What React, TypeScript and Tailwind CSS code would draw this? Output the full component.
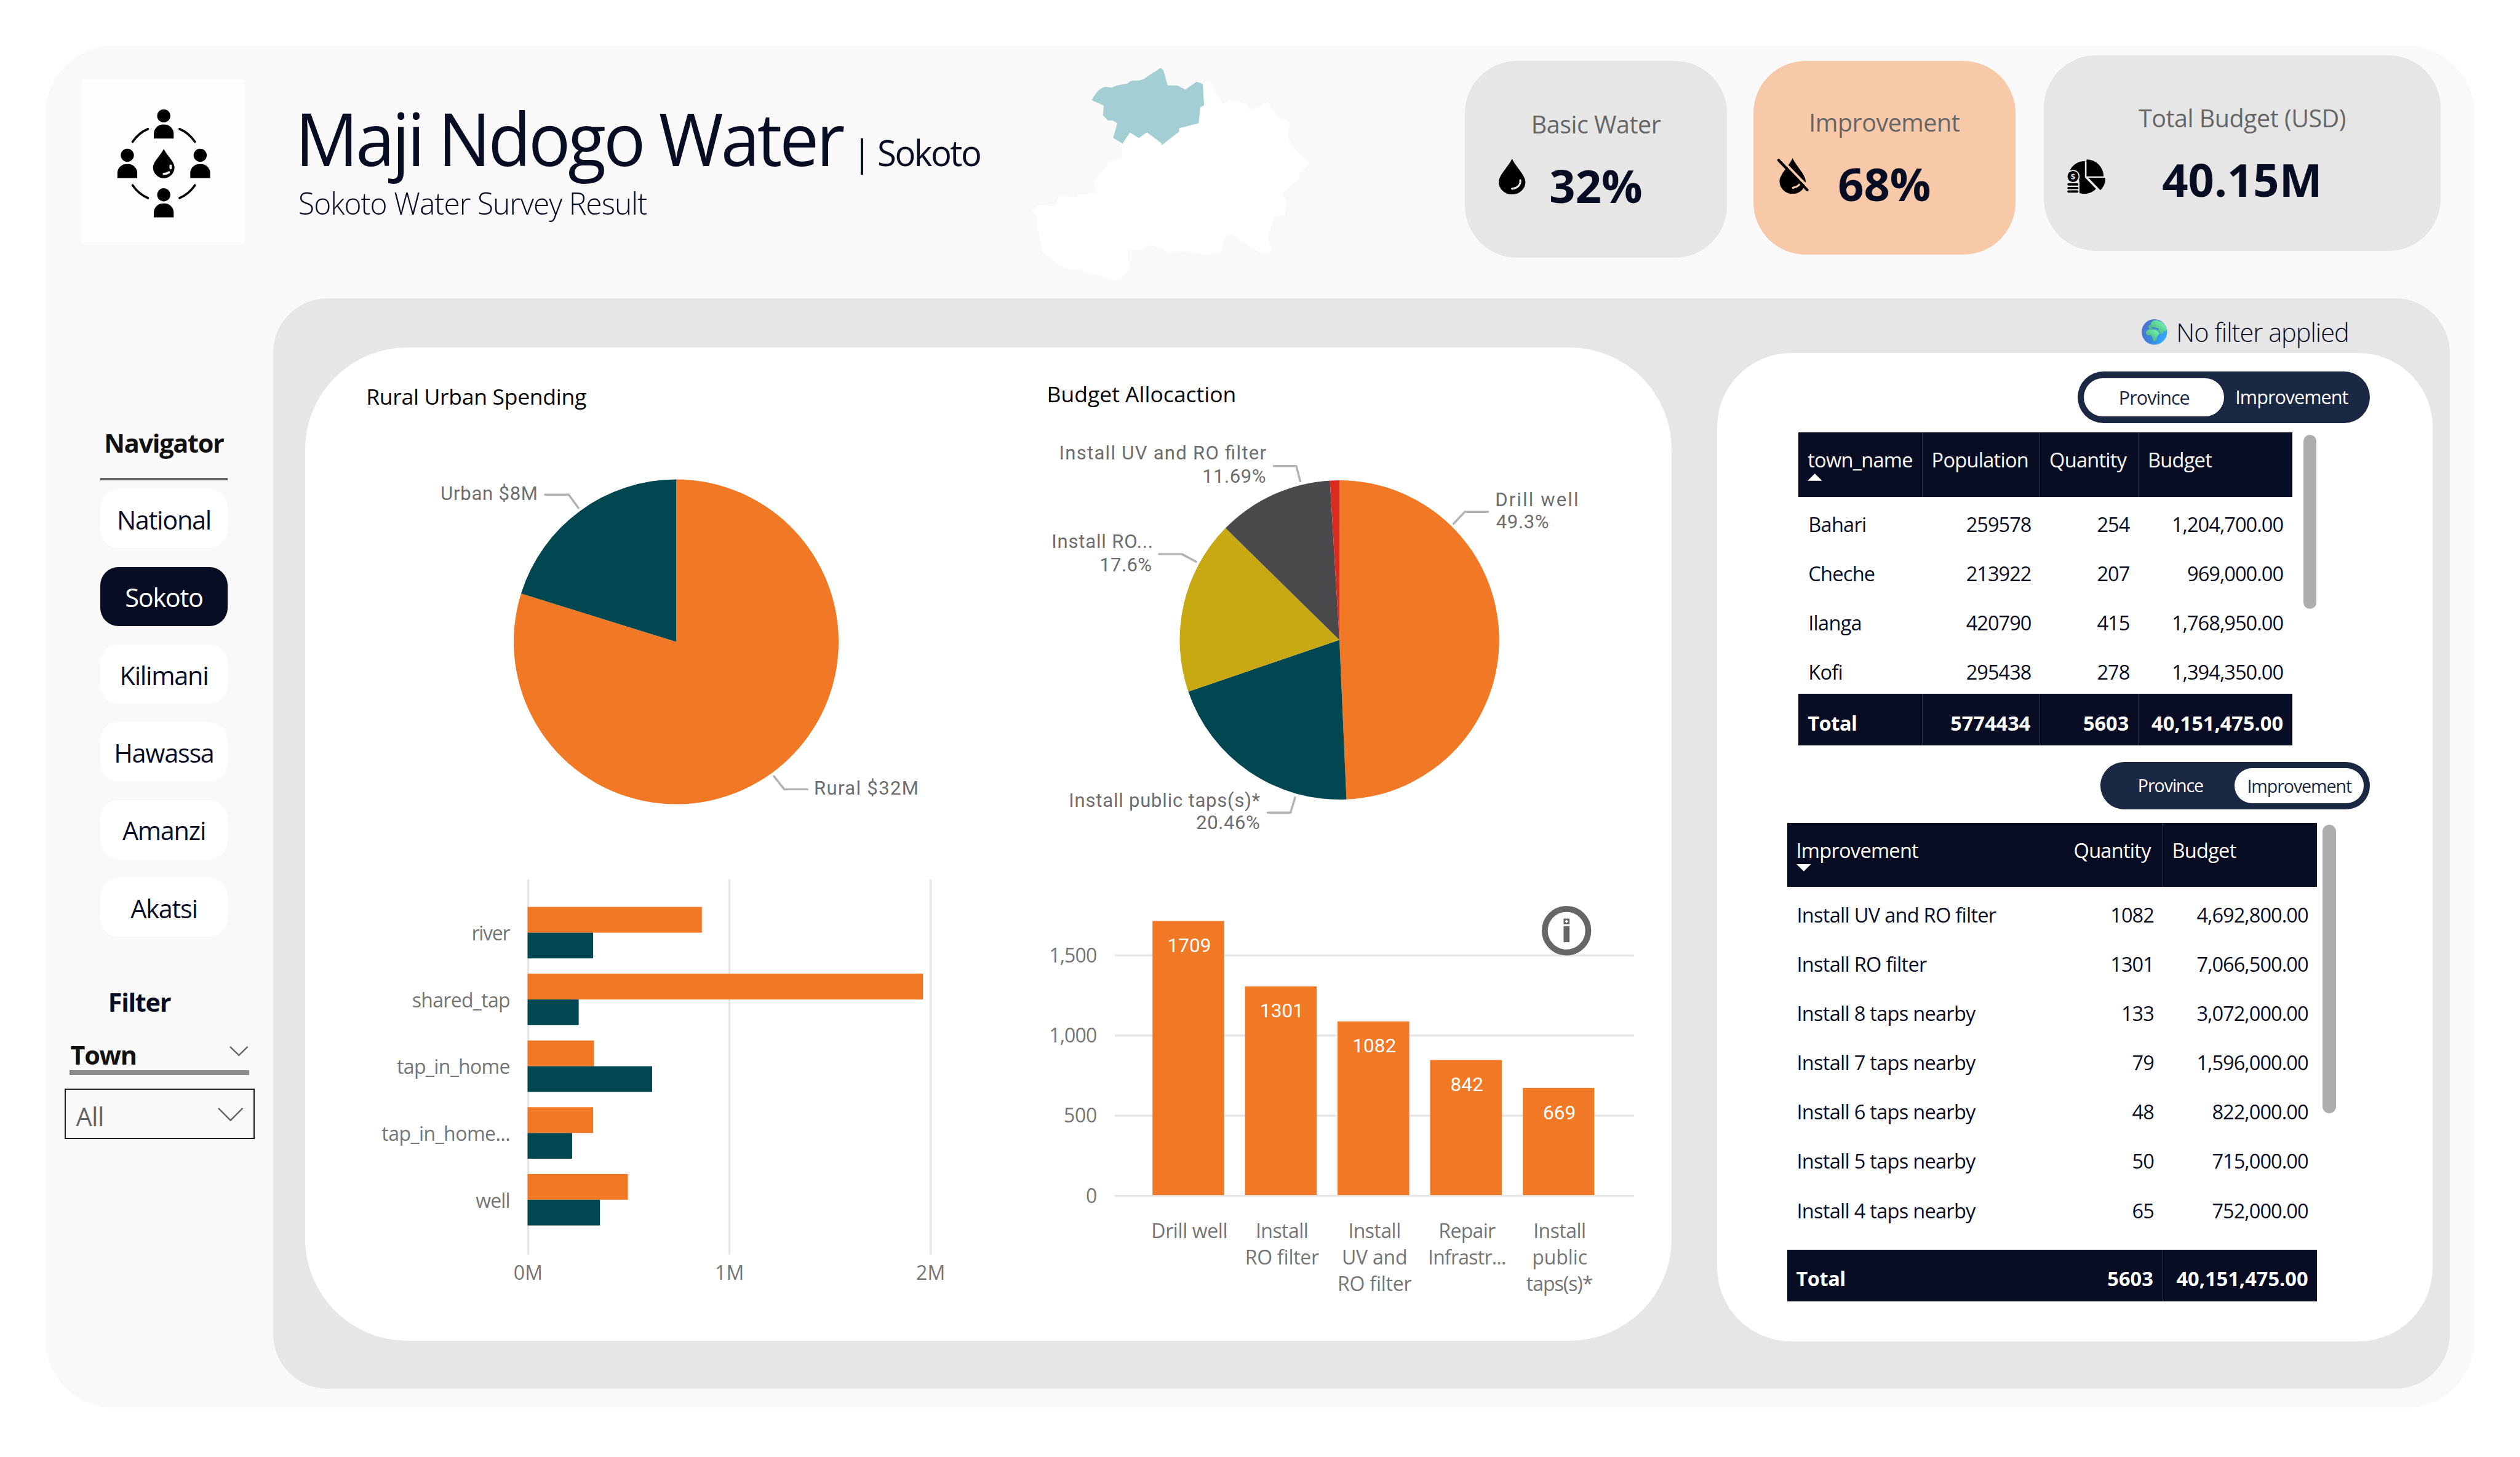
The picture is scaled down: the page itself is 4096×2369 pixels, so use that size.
import type { ReactNode } from "react";

const ORANGE = "#f17925";
const TEAL = "#014751";
const GRID = "#e6e6e6";

function Person({ x, y }: { x: number; y: number }) {
  return (
    <g transform={`translate(${x} ${y})`}>
      <circle cx="0" cy="0" r="32.5" />
      <path d="M-49 112v-24a45 45 0 0 1 45-45h8a45 45 0 0 1 45 45v24z" />
    </g>
  );
}

function Logo() {
  return (
    <svg viewBox="0 0 540 600" className="h-[200px] w-[180px]">
      <Person x={268} y={62} />
      <Person x={88} y={257} />
      <Person x={448} y={257} />
      <Person x={268} y={452} />
      <g fill="none" stroke="#000" strokeWidth="11" strokeLinecap="round">
        <path d="M190 127Q145 145 114 190" />
        <path d="M346 127Q391 145 422 190" />
        <path d="M114 405Q145 450 190 468" />
        <path d="M422 405Q391 450 346 468" />
      </g>
      <path d="M268 225C282 256 321 288 321 317A53 53 0 0 1 215 317C215 288 254 256 268 225Z" />
      <g fill="none" stroke="#fdfdfd" strokeWidth="11" strokeLinecap="round">
        <path d="M302 308v13" />
        <path d="M268 349q14 0 25-8" />
      </g>
    </svg>
  );
}

function RegionMap() {
  return (
    <svg viewBox="0 0 1568 1200" preserveAspectRatio="none" className="mt-[5px] h-[400px] w-[560px] shrink-0">
      <path
        fill="#fff"
        d="M903 172L929 160L989 272L1004 272L1018 256L1100 272L1121 309L1199 264L1243 341L1282 350Q1299 356 1299 370L1291 440L1308 472L1312 488L1394 565L1344 624V644L1262 717L1287 752L1278 824L1229 830L1211 898Q1195 935 1202 950L1217 990Q1217 1010 1185 1014Q1165 1014 1144 992L1115 977L1097 962L1065 946L1041 920Q1020 914 1009 922Q996 945 992 970Q988 1003 975 1005L935 1016Q905 1020 880 1012L862 1007L820 1001L792 1006L770 1001Q755 1014 735 1004L718 992L692 981L652 973Q640 980 625 992Q600 996 575 990Q552 988 552 996V1040L566 1072V1086L530 1130Q508 1147 485 1146Q466 1144 455 1133L423 1119Q400 1114 380 1117L350 1100Q330 1088 308 1093L260 1084Q243 1078 200 1037Q170 1022 157 1000L155 968L145 940V908L134 890L136 832L107 803L145 771L219 780L239 725L311 735L320 723L404 715L399 648L460 580V560L527 544V470L484 442L503 370L484 357H461L437 330L441 283L384 255Z"
      />
      <path
        fill="#a3cfd4"
        stroke="#fff"
        strokeWidth="3"
        d="M384 255L405 220Q428 188 455 187Q470 191 481 191L500 181L551 171Q565 157 582 156Q610 160 632 145Q650 130 678 113L705 93L719 105L739 180L783 181L819 200L870 162L901 173L907 282L889 291L882 370L792 395V411L707 482V468L642 416L604 444L564 416L530 472L484 442L503 370L484 357H461L437 330L441 283Z"
      />
    </svg>
  );
}

function DropIcon() {
  return (
    <svg viewBox="0 0 44 59" className="h-[59px] w-[44px]">
      <path d="M22 0C27 12 44 27 44 38.500A22 20.500 0 0 1 0 38.500C0 27 17 12 22 0Z" />
      <path d="M35.500 35.500c1 8-5 13-13.500 14" fill="none" stroke="#e6e6e6" strokeWidth="3.200" strokeLinecap="round" />
    </svg>
  );
}

function DropOffIcon() {
  return (
    <svg viewBox="0 0 51 59" className="h-[59px] w-[51px]">
      <path d="M25 0C30 12 46.500 27 46.500 38.500A21.500 20.500 0 0 1 3.500 38.500C3.500 27 20 12 25 0Z" />
      <path d="M38 35.500c1 8-5 12-12.500 13.500" fill="none" stroke="#f8c9a9" strokeWidth="3.200" strokeLinecap="round" />
      <path d="M4 0L51 48" stroke="#f8c9a9" strokeWidth="4" />
      <path d="M2 3.500L49 52.500" stroke="#000" strokeWidth="4.500" strokeLinecap="round" />
    </svg>
  );
}

function BudgetIcon() {
  return (
    <svg viewBox="47 66 190 171" className="h-[57px] w-[63px]">
      <path d="M143 66A85 85 0 0 1 228 150H143Z" />
      <path d="M152 157H237A85 85 0 0 1 212 219Z" />
      <path d="M135 75V156L190 212A80 80 0 0 1 107 233V170L60 122A80 80 0 0 1 135 75Z" />
      <circle cx="76" cy="151" r="33" fill="#e6e6e6" />
      <rect x="40" y="180" width="68" height="60" fill="#e6e6e6" />
      <circle cx="76" cy="151" r="27.500" />
      <rect x="48" y="185" width="55" height="11" rx="5" />
      <rect x="48" y="203" width="55" height="11" rx="5" />
      <rect x="48" y="220" width="55" height="11" rx="5" />
      <text x="76" y="165" textAnchor="middle" fill="#e6e6e6" className="font-['Open_Sans'] text-[40px] font-bold">
        $
      </text>
    </svg>
  );
}

function Globe() {
  return (
    <svg viewBox="0 0 48 48" className="size-[42px]">
      <defs>
        <linearGradient id="sea" x1="0" y1="0.300" x2="1" y2="0.700">
          <stop offset="0" stopColor="#4d6fd0" />
          <stop offset="0.500" stopColor="#3a86e0" />
          <stop offset="1" stopColor="#2fb2ff" />
        </linearGradient>
        <linearGradient id="land" x1="0" y1="1" x2="1" y2="0">
          <stop offset="0" stopColor="#3f9f72" />
          <stop offset="1" stopColor="#7dffb4" />
        </linearGradient>
      </defs>
      <circle cx="24" cy="24" r="24" fill="url(#sea)" />
      <g fill="url(#land)">
        <path d="M13 12l4-2 1-4 5-4 6 0q9 2 15 9l3 8-2 4-3-1-2 5-4 1-3-5-4-2-5 0-3-2-6 0-2-3z" />
        <path d="M8 24q3-5 8-5l7 1 7 2 4 5-3 3-2 4-1 4-3 3h-3l-2-8-3-3-6 0-3-2z" />
      </g>
      <path d="M18 16l6-1 7 2 2 3-6-1-6-1z" fill="#3a86e0" />
    </svg>
  );
}

type KpiProps = {
  label: string;
  value: string;
  icon: ReactNode;
  box: string;
  iconBox: string;
};

function Kpi({ label, value, icon, box, iconBox }: KpiProps) {
  return (
    <div className={`flex shrink-0 flex-col rounded-[86px] ${box}`}>
      <p className="text-center text-[40px] leading-[56px] tracking-[-0.5px] text-[#666]">{label}</p>
      <div className="mt-[22px] grid grid-cols-[110px_1fr_110px]">
        <div className={iconBox}>{icon}</div>
        <p className="pt-px text-center text-[75px] leading-[100px] font-bold text-[#080d24]">{value}</p>
      </div>
    </div>
  );
}

function Header() {
  return (
    <header className="flex h-[416px] shrink-0 items-start">
      <div className="mt-[56px] ml-[60px] h-[272px] w-[268px] shrink-0 bg-[#fdfdfd] pt-[39px] pl-[45px]">
        <Logo />
      </div>
      <div className="mt-[75px] ml-[83px] w-[1174px] shrink-0 text-[#080d24]">
        <div className="flex h-[154px] items-baseline leading-[154px] whitespace-nowrap">
          <h1 className="w-[917px] origin-left scale-x-[0.96] text-[120px] tracking-[-4.300px]">Maji Ndogo Water</h1>
          <span className="w-[42px] text-[60px]">|</span>
          <span className="origin-left scale-x-[0.95] text-[60px] tracking-[-2.600px]">Sokoto</span>
        </div>
        <p className="ml-[5px] origin-left scale-x-[0.97] text-[50px] leading-[60px] font-light tracking-[-1px]">
          Sokoto Water Survey Result
        </p>
      </div>
      <RegionMap />
      <Kpi
        label="Basic Water"
        value="32%"
        icon={<DropIcon />}
        box="mt-[25px] ml-[192.500px] h-[325px] w-[431.500px] bg-[#e6e6e6] pt-[77px]"
        iconBox="mt-[6px] pl-[56px]"
      />
      <Kpi
        label="Improvement"
        value="68%"
        icon={<DropOffIcon />}
        box="mt-[25px] ml-[43.500px] h-[319px] w-[431.500px] bg-[#f8c9a9] pt-[74px]"
        iconBox="mt-[8px] pl-[40px]"
      />
      <Kpi
        label="Total Budget (USD)"
        value="40.15M"
        icon={<BudgetIcon />}
        box="mt-[16px] ml-[46.500px] h-[322px] w-[654px] bg-[#e6e6e6] pt-[76px]"
        iconBox="mt-[17px] pl-[39px]"
      />
    </header>
  );
}

const PROVINCES = ["National", "Sokoto", "Kilimani", "Hawassa", "Amanzi", "Akatsi"];

function Sidebar() {
  return (
    <aside className="w-[375px] shrink-0 text-[42px] leading-[56px] tracking-[-1.300px] text-[#080d24]">
      <nav className="mt-[211px] ml-[90px] flex w-[210px] flex-col">
        <h2 className="text-center font-bold text-[#111]">Navigator</h2>
        <hr className="mt-[29px] h-[4px] border-0 bg-[#666]" />
        <div className="mt-[15px] flex flex-col gap-[31px]">
          {PROVINCES.map((name) => (
            <button
              key={name}
              className={
                name === "Sokoto"
                  ? "h-[97px] rounded-[30px] bg-[#080d24] pt-[5px] text-white"
                  : "h-[97px] rounded-[30px] bg-white pt-[5px]"
              }
            >
              {name}
            </button>
          ))}
        </div>
      </nav>
      <h2 className="mt-[80px] ml-[103px] font-bold">Filter</h2>
      <div className="mt-[31px] ml-[40px] flex h-[61px] w-[295px] justify-between border-b-[9px] border-[#8b8b8b] pr-[1px] pl-[1px]">
        <span className="font-bold text-[#111]">Town</span>
        <svg viewBox="0 0 31 17" className="mt-[14px] h-[17px] w-[31px]">
          <path d="M1 1L15.500 15L30 1" fill="none" stroke="#666" strokeWidth="2.500" />
        </svg>
      </div>
      <div className="mt-[22px] ml-[31px] flex h-[84px] w-[313px] items-center justify-between border-[3px] border-[#1c1c1c] pt-[2px] pr-[16px] pl-[17px]">
        <span className="pt-[7px] tracking-[-0.500px] text-[#666]">All</span>
        <svg viewBox="0 0 42 23" className="h-[23px] w-[42px]">
          <path d="M1 1L21 21L41 1" fill="none" stroke="#666" strokeWidth="2.500" />
        </svg>
      </div>
    </aside>
  );
}

type Slice = { value: number; color: string };

function Pie({ cx, cy, r, slices }: { cx: number; cy: number; r: number; slices: Slice[] }) {
  const total = slices.reduce((sum, s) => sum + s.value, 0);
  let start = 0;
  return (
    <g>
      {slices.map((s) => {
        const a0 = (start / total) * 2 * Math.PI;
        start += s.value;
        const a1 = (start / total) * 2 * Math.PI;
        const p = (a: number) => `${(cx + r * Math.sin(a)).toFixed(2)} ${(cy - r * Math.cos(a)).toFixed(2)}`;
        return (
          <path
            key={s.color}
            fill={s.color}
            d={`M${cx} ${cy}L${p(a0)}A${r} ${r} 0 ${a1 - a0 > Math.PI ? 1 : 0} 1 ${p(a1)}Z`}
          />
        );
      })}
    </g>
  );
}

type LabelProps = { x: number; y: number; w: number; end?: boolean; children: string };

function PieLabel({ x, y, w, end, children }: LabelProps) {
  return (
    <text
      x={x}
      y={y}
      textLength={w}
      textAnchor={end ? "end" : "start"}
      fill="#6e6e6e"
      className="font-['Roboto'] text-[31.500px]"
    >
      {children}
    </text>
  );
}

function Leader({ points }: { points: string }) {
  return <polyline points={points} fill="none" stroke="#b3b3b3" strokeWidth="3.500" strokeLinecap="round" strokeLinejoin="round" />;
}

function SpendingPie() {
  return (
    <section className="pt-[57px]">
      <h3 className="ml-[100px] text-[36px] leading-[48px] tracking-[-0.300px] text-black">Rural Urban Spending</h3>
      <svg viewBox="503 677 1170 723" className="h-[723px] w-[1170px]">
        <Pie cx={1114} cy={1057.5} r={267.5} slices={[{ value: 79.8, color: ORANGE }, { value: 20.2, color: TEAL }]} />
        <Leader points="898,815 937,815 953,837" />
        <PieLabel x={886} y={824} w={160} end>Urban $8M</PieLabel>
        <Leader points="1275,1279 1292,1300.5 1330,1300.5" />
        <PieLabel x={1341} y={1309} w={172}>Rural $32M</PieLabel>
      </svg>
    </section>
  );
}

function BudgetPie() {
  return (
    <section className="pt-[53px]">
      <h3 className="ml-[51px] text-[36px] leading-[48px] text-black">Budget Allocaction</h3>
      <svg viewBox="1673 673 1080 727" className="h-[727px] w-[1080px]">
        <Pie
          cx={2206}
          cy={1054.5}
          r={263}
          slices={[
            { value: 49.3, color: ORANGE },
            { value: 20.46, color: TEAL },
            { value: 17.6, color: "#c9a913" },
            { value: 11.69, color: "#4a4a4d" },
            { value: 0.95, color: "#d92b20" },
          ]}
        />
        <Leader points="2394,863 2412.500,843.500 2451,843.500" />
        <PieLabel x={2462.5} y={834} w={137}>Drill well</PieLabel>
        <PieLabel x={2464} y={871} w={87}>49.3%</PieLabel>
        <Leader points="2098,768 2135,768 2141.500,793" />
        <PieLabel x={2085.5} y={757.5} w={341} end>Install UV and RO filter</PieLabel>
        <PieLabel x={2085} y={796} w={105} end>11.69%</PieLabel>
        <Leader points="1909,913 1946.500,913 1970,925.500" />
        <PieLabel x={1899} y={903} w={167} end>Install RO...</PieLabel>
        <PieLabel x={1897} y={941} w={86} end>17.6%</PieLabel>
        <Leader points="2088,1339 2125.500,1339 2133,1314" />
        <PieLabel x={2075.5} y={1329.5} w={315} end>Install public taps(s)*</PieLabel>
        <PieLabel x={2075} y={1366} w={105} end>20.46%</PieLabel>
      </svg>
    </section>
  );
}

const SOURCES = [
  { name: "river", w: 64, rural: 287, urban: 108 },
  { name: "shared_tap", w: 162, rural: 651.2, urban: 84.2 },
  { name: "tap_in_home", w: 187, rural: 109.4, urban: 205.1 },
  { name: "tap_in_home...", w: 212, rural: 108, urban: 73.4 },
  { name: "well", w: 57, rural: 165.2, urban: 119.2 },
];

function SourceBars() {
  return (
    <svg viewBox="503 1400 1170 809" className="h-[809px] w-[1170px] font-['Open_Sans'] text-[32.500px]">
      {[870.3, 1201.7, 1533].map((x, i) => (
        <g key={x}>
          <line x1={x} x2={x} y1="1449" y2="2066.500" stroke={GRID} strokeWidth="3.500" />
          <text x={x} y="2108.500" textAnchor="middle" textLength="48" fill="#757575">
            {`${i}M`}
          </text>
        </g>
      ))}
      {SOURCES.map((s, i) => {
        const y = 1493.8 + i * 110;
        return (
          <g key={s.name}>
            <rect x="869.300" y={y} width={s.rural} height="42.500" fill={ORANGE} />
            <rect x="869.300" y={y + 42.5} width={s.urban} height="42.300" fill={TEAL} />
            <text x="841" y={y + 55.5} textAnchor="end" textLength={s.w} fill="#757575">
              {s.name}
            </text>
          </g>
        );
      })}
    </svg>
  );
}

type Job = { x: number; top: number; n: string; nw: number; lines: [string, number][] };

const JOBS: Job[] = [
  { x: 1898.2, top: 1517, n: "1709", nw: 72, lines: [["Drill well", 126]] },
  { x: 2050.6, top: 1624.7, n: "1301", nw: 72, lines: [["Install", 87], ["RO filter", 122]] },
  { x: 2203, top: 1682.4, n: "1082", nw: 72, lines: [["Install", 87], ["UV and", 108], ["RO filter", 122]] },
  { x: 2355.4, top: 1746, n: "842", nw: 54, lines: [["Repair", 94], ["Infrastr...", 129]] },
  { x: 2507.8, top: 1792, n: "669", nw: 54, lines: [["Install", 87], ["public", 91], ["taps(s)*", 110]] },
];

const TICKS: [string, number, number][] = [
  ["1,500", 1573.7, 79],
  ["1,000", 1705.7, 79],
  ["500", 1837.8, 55],
  ["0", 1969.9, 18],
];

function ImprovementBars() {
  return (
    <svg viewBox="1673 1400 1080 809" className="h-[809px] w-[1080px] font-['Open_Sans'] text-[32.500px]">
      {TICKS.map(([label, y, w]) => (
        <g key={label}>
          <line x1="1836" x2="2691" y1={y} y2={y} stroke={GRID} strokeWidth="3.500" />
          <text x="1807" y={y + 11.3} textAnchor="end" textLength={w} fill="#757575">
            {label}
          </text>
        </g>
      ))}
      {JOBS.map((j) => (
        <g key={j.n}>
          <rect x={j.x} y={j.top} width="118" height={1968.5 - j.top} fill={ORANGE} />
          <text
            x={j.x + 60.5}
            y={j.top + 51.3}
            textAnchor="middle"
            textLength={j.nw}
            fill="#fff"
            className="font-['Roboto'] text-[32px]"
          >
            {j.n}
          </text>
          {j.lines.map(([t, w], i) => (
            <text key={t} x={j.x + 61} y={2039 + i * 43.5} textAnchor="middle" textLength={w} fill="#757575">
              {t}
            </text>
          ))}
        </g>
      ))}
      <circle cx="2580" cy="1533" r="35.800" fill="none" stroke="#666" strokeWidth="9.800" />
      <path d="M2575.200 1525.500h9.800v26.500h-9.800zM2575.200 1513h9.800v9.400h-9.800z" fill="#666" />
      <path d="M2580.100 1515l2.800 2.700-2.800 2.700-2.800-2.700z" fill="#fff" />
    </svg>
  );
}

type Column = { head: string; sep: boolean };

type TableProps = {
  columns: Column[];
  rows: string[][];
  total: string[];
  sort: "up" | "down";
  cols: string;
  headBox: string;
  rowsBox: string;
  rowBox: string;
};

function DataTable({ columns, rows, total, sort, cols, headBox, rowsBox, rowBox }: TableProps) {
  return (
    <div className="text-[33px] leading-[44px] tracking-[-0.750px] text-[#080d24]">
      <div className={`grid ${cols} ${headBox} bg-[#080d24] text-white`}>
        {columns.map((c, i) => (
          <div key={c.head} className={c.sep ? "border-r border-[#2c3144] pt-[24px] pl-[15px]" : "pt-[24px] pl-[15px]"}>
            <p>{c.head}</p>
            {i === 0 && (
              <svg viewBox="0 0 24 12" className="h-[12px] w-[24px]">
                <path d={sort === "up" ? "M0 12L12 0L24 12Z" : "M0 0H24L12 12Z"} fill="#fff" />
              </svg>
            )}
          </div>
        ))}
      </div>
      <div className={rowsBox}>
        {rows.map((r) => (
          <div key={r[0]} className={`grid h-[81.200px] items-center ${cols} ${rowBox}`}>
            {r.map((v, i) => (
              <p key={i} className={i === 0 ? "pl-[16px]" : "pr-[15px] text-right tracking-[-1px]"}>
                {v}
              </p>
            ))}
          </div>
        ))}
      </div>
      <div className={`grid h-[85px] bg-[#080d24] font-bold tracking-normal text-white ${cols}`}>
        {total.map((v, i) => (
          <p
            key={i}
            className={`pt-[26px] ${i === 0 ? "pl-[15px] tracking-[-0.500px]" : "pr-[15px] text-right"} ${columns[i].sep ? "border-r border-[#2c3144]" : ""}`}
          >
            {v}
          </p>
        ))}
      </div>
    </div>
  );
}

function RightColumn() {
  return (
    <div className="ml-[75px] flex w-[1178px] shrink-0 flex-col">
      <div className="mt-[28px] flex h-[56px] items-center justify-end gap-[15px] pr-[138px]">
        <Globe />
        <span className="pt-[2px] text-[42px] leading-[56px] font-light tracking-[-1px] text-[#080d24]">No filter applied</span>
      </div>
      <div className="mt-[6.500px] flex h-[1628px] flex-col rounded-[122px] bg-white">
        <div className="mt-[30.500px] mr-[103px] flex h-[85px] w-[481px] items-center self-end rounded-full bg-[#1b2844] pl-[10px] text-[31px] leading-[64px] tracking-[-1px] text-white">
          <span className="h-[63px] w-[231px] rounded-full bg-white text-center text-[#1b2844]">Province</span>
          <span className="w-[222px] text-center">Improvement</span>
        </div>
        <div className="mt-[15px] ml-[134px] flex">
          <DataTable
            columns={[
              { head: "town_name", sep: true },
              { head: "Population", sep: true },
              { head: "Quantity", sep: true },
              { head: "Budget", sep: false },
            ]}
            rows={[
              ["Bahari", "259578", "254", "1,204,700.00"],
              ["Cheche", "213922", "207", "969,000.00"],
              ["Ilanga", "420790", "415", "1,768,950.00"],
              ["Kofi", "295438", "278", "1,394,350.00"],
            ]}
            total={["Total", "5774434", "5603", "40,151,475.00"]}
            sort="up"
            cols="grid-cols-[204px_194px_162px_253px]"
            headBox="h-[107px]"
            rowsBox="h-[324px]"
            rowBox="pt-[8px]"
          />
          <div className="mt-[4px] ml-[18px] h-[287px] w-[22px] rounded-full bg-[#aeacac]" />
        </div>
        <div className="mt-[27.500px] mr-[103px] flex h-[78px] w-[444px] items-center self-end rounded-full bg-[#1b2844] pl-[10px] text-[29px] leading-[59px] tracking-[-1.100px] text-white">
          <span className="w-[211px] text-center">Province</span>
          <span className="h-[57px] w-[213px] rounded-full bg-white text-center text-[#1b2844]">Improvement</span>
        </div>
        <div className="mt-[22px] ml-[115px] flex">
          <DataTable
            columns={[
              { head: "Improvement", sep: false },
              { head: "Quantity", sep: true },
              { head: "Budget", sep: false },
            ]}
            rows={[
              ["Install UV and RO filter", "1082", "4,692,800.00"],
              ["Install RO filter", "1301", "7,066,500.00"],
              ["Install 8 taps nearby", "133", "3,072,000.00"],
              ["Install 7 taps nearby", "79", "1,596,000.00"],
              ["Install 6 taps nearby", "48", "822,000.00"],
              ["Install 5 taps nearby", "50", "715,000.00"],
              ["Install 4 taps nearby", "65", "752,000.00"],
            ]}
            total={["Total", "5603", "40,151,475.00"]}
            sort="down"
            cols="grid-cols-[457px_162px_254px]"
            headBox="h-[106px]"
            rowsBox="h-[597px]"
            rowBox="pt-[10px]"
          />
          <div className="mt-[3px] ml-[9px] h-[475px] w-[22px] rounded-full bg-[#aeacac]" />
        </div>
      </div>
    </div>
  );
}

export default function App() {
  return (
    <div className="h-[2369px] w-[4096px] overflow-hidden bg-white font-['Open_Sans',sans-serif]">
      <div className="h-[2400px] w-[4150px] bg-white p-[75px] [zoom:0.987]">
        <div className="flex h-[2244px] w-[4000px] flex-col rounded-[112px] bg-[#f9f9f9]">
          <Header />
          <div className="flex">
            <Sidebar />
            <main className="flex h-[1797px] w-[3584px] shrink-0 rounded-[90px] bg-[#e6e6e6]">
              <div className="mt-[81px] ml-[53px] grid h-[1637px] w-[2250px] shrink-0 grid-cols-[1170px_1080px] grid-rows-[828px_809px] rounded-[168px] bg-white">
                <SpendingPie />
                <BudgetPie />
                <SourceBars />
                <ImprovementBars />
              </div>
              <RightColumn />
            </main>
          </div>
        </div>
      </div>
    </div>
  );
}
